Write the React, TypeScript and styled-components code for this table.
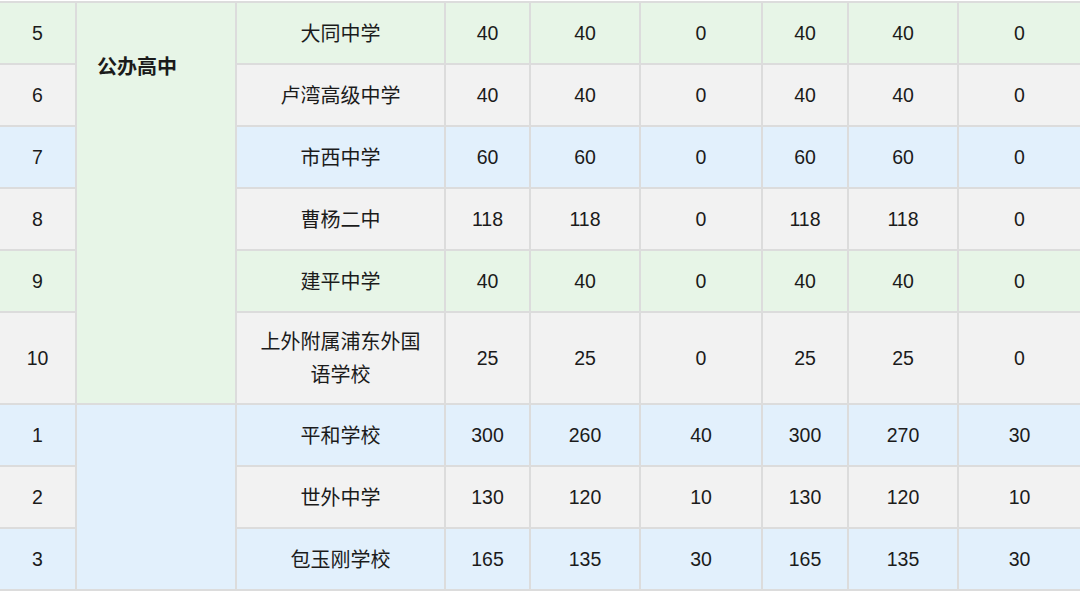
import styled, { createGlobalStyle } from 'styled-components';

const GlobalStyle = createGlobalStyle`
  html, body {
    margin: 0;
    padding: 0;
    background: #ffffff;
    overflow: hidden;
  }
  body {
    font-family: "Liberation Sans", "Noto Sans CJK SC", sans-serif;
    color: #1b1b1b;
  }
`

type Tone = 'green' | 'gray' | 'blue';

const toneColor: Record<Tone, string> = {
    green: '#e7f5e7',
    gray: '#f2f2f2',
    blue: '#e2f0fc',
};

const Page = styled.div`
    width: 1080px;
    height: 592px;
    overflow: hidden;
    padding-top: 1px;
    box-sizing: border-box;
`

const Table = styled.table`
    border-collapse: collapse;
    table-layout: fixed;
    width: 1082px;
    margin-left: -2px;
`

const Row = styled.tr<{ $tone: Tone; $tall?: boolean }>`
    background: ${(p) => toneColor[p.$tone]};
    height: ${(p) => (p.$tall ? '92px' : '62px')};
`

const Cell = styled.td`
    border: 2px solid #dcdcdc;
    text-align: center;
    vertical-align: middle;
    font-size: 19.5px;
    line-height: 31px;
    padding: 0 16px;
`

const GroupCell = styled.td<{ $tone: Tone }>`
    border: 2px solid #dcdcdc;
    background: ${(p) => toneColor[p.$tone]};
    vertical-align: top;
    text-align: left;
    padding: 48px 0 0 20px;
    font-size: 20px;
    font-weight: bold;
    font-family: "Noto Sans CJK SC", sans-serif;
`

const Name = styled.span`
    font-family: "Noto Sans CJK SC", sans-serif;
    font-size: 20px;
`

type School = {
    no: number;
    name: string;
    nums: number[];
    tone: Tone;
    tall?: boolean;
};

const publicSchools: School[] = [
    { no: 5, name: '大同中学', nums: [40, 40, 0, 40, 40, 0], tone: 'green' },
    { no: 6, name: '卢湾高级中学', nums: [40, 40, 0, 40, 40, 0], tone: 'gray' },
    { no: 7, name: '市西中学', nums: [60, 60, 0, 60, 60, 0], tone: 'blue' },
    { no: 8, name: '曹杨二中', nums: [118, 118, 0, 118, 118, 0], tone: 'gray' },
    { no: 9, name: '建平中学', nums: [40, 40, 0, 40, 40, 0], tone: 'green' },
    { no: 10, name: '上外附属浦东外国语学校', nums: [25, 25, 0, 25, 25, 0], tone: 'gray', tall: true },
];

const privateSchools: School[] = [
    { no: 1, name: '平和学校', nums: [300, 260, 40, 300, 270, 30], tone: 'blue' },
    { no: 2, name: '世外中学', nums: [130, 120, 10, 130, 120, 10], tone: 'gray' },
    { no: 3, name: '包玉刚学校', nums: [165, 135, 30, 165, 135, 30], tone: 'blue' },
];

const widths = [77, 160, 209, 85, 110, 122, 86, 110, 123];

function SchoolRow({ school, group }: { school: School; group?: React.ReactNode }) {
    return (
        <Row $tone={school.tone} $tall={school.tall}>
            <Cell>{school.no}</Cell>
            {group}
            <Cell>
                <Name>{school.name}</Name>
            </Cell>
            {school.nums.map((n, i) => (
                <Cell key={i}>{n}</Cell>
            ))}
        </Row>
    )
}

function App() {
    return (
        <Page>
            <GlobalStyle />
            <Table>
                <colgroup>
                    {widths.map((w, i) => (
                        <col key={i} style={{ width: w }} />
                    ))}
                </colgroup>
                <tbody>
                    {publicSchools.map((s, i) => (
                        <SchoolRow
                            key={'p' + s.no}
                            school={s}
                            group={i === 0 ? <GroupCell $tone="green" rowSpan={publicSchools.length}>公办高中</GroupCell> : null}
                        />
                    ))}
                    {privateSchools.map((s, i) => (
                        <SchoolRow
                            key={'m' + s.no}
                            school={s}
                            group={i === 0 ? <GroupCell $tone="blue" rowSpan={privateSchools.length + 3}></GroupCell> : null}
                        />
                    ))}
                </tbody>
            </Table>
        </Page>
    )
}

export default App
